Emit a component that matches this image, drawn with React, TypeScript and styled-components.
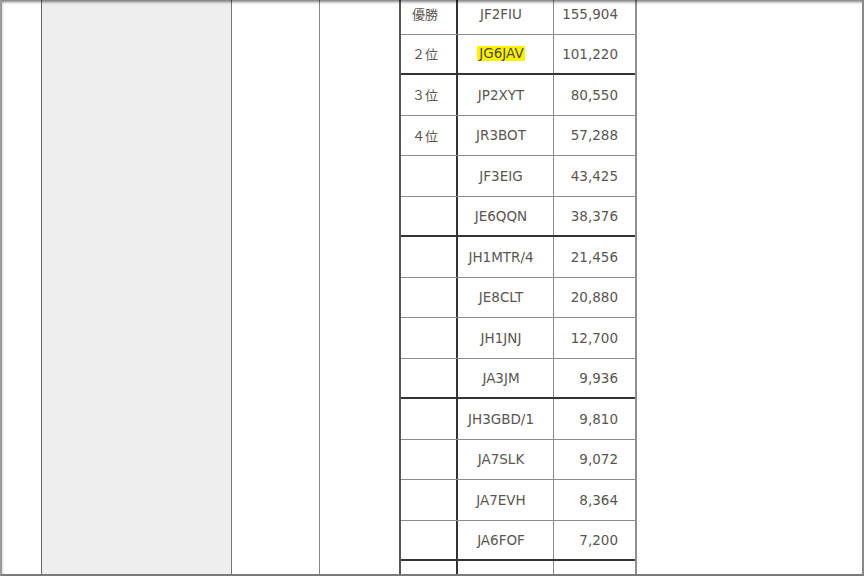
import styled, { createGlobalStyle } from 'styled-components';

type Entry = { rank: string; call: string; score: string; mark?: boolean };

const entries: Entry[] = [
  { rank: '優勝', call: 'JF2FIU', score: '155,904' },
  { rank: '２位', call: 'JG6JAV', score: '101,220', mark: true },
  { rank: '３位', call: 'JP2XYT', score: '80,550' },
  { rank: '４位', call: 'JR3BOT', score: '57,288' },
  { rank: '', call: 'JF3EIG', score: '43,425' },
  { rank: '', call: 'JE6QQN', score: '38,376' },
  { rank: '', call: 'JH1MTR/4', score: '21,456' },
  { rank: '', call: 'JE8CLT', score: '20,880' },
  { rank: '', call: 'JH1JNJ', score: '12,700' },
  { rank: '', call: 'JA3JM', score: '9,936' },
  { rank: '', call: 'JH3GBD/1', score: '9,810' },
  { rank: '', call: 'JA7SLK', score: '9,072' },
  { rank: '', call: 'JA7EVH', score: '8,364' },
  { rank: '', call: 'JA6FOF', score: '7,200' },
  { rank: '', call: '', score: '' },
];

const GlobalStyle = createGlobalStyle`
  html, body {
    margin: 0;
    padding: 0;
    background: #ffffff;
  }
  body {
    font-family: "DejaVu Sans", "Noto Sans CJK JP", sans-serif;
  }
`;

const Frame = styled.div`
  box-sizing: border-box;
  width: 864px;
  height: 576px;
  overflow: hidden;
  display: flex;
  position: relative;
  border-left: 2px solid #9a9a9a;
  border-right: 2px solid #8a8a8a;
  border-bottom: 2px solid #7a7a7a;
  background: #ffffff;
  &::after {
    content: '';
    position: absolute;
    inset: 0;
    pointer-events: none;
    box-shadow: inset 0 4px 3px -2px rgba(0, 0, 0, 0.5), inset 3px 0 3px -2px rgba(0, 0, 0, 0.12);
  }
`;

const Column = styled.div<{ $w: number; $bg?: string; $line?: string }>`
  box-sizing: border-box;
  flex: 0 0 ${({ $w }) => $w}px;
  height: 100%;
  background: ${({ $bg }) => $bg || '#ffffff'};
  border-right: ${({ $line }) => ($line ? `1px solid ${$line}` : 'none')};
`;

const Filler = styled.div`
  flex: 1;
  height: 100%;
`;

const Ranking = styled.div`
  flex: 0 0 238px;
  box-sizing: border-box;
  height: 100%;
  border-left: 2px solid #555555;
  border-right: 2px solid #8f8f8f;
  display: flex;
  flex-direction: column;
`;

const Rows = styled.div`
  margin-top: -6px;
`;

const Row = styled.div<{ $thick: boolean }>`
  box-sizing: border-box;
  height: 40.5px;
  display: flex;
  border-bottom: ${({ $thick }) => ($thick ? '2px solid #333333' : '1px solid #8c8c8c')};
`;

const Cell = styled.div<{ $w: number; $align: 'left' | 'center' | 'right'; $line: string; $lw: number }>`
  box-sizing: border-box;
  flex: 0 0 ${({ $w }) => $w}px;
  display: flex;
  align-items: center;
  justify-content: ${({ $align }) =>
    $align === 'left' ? 'flex-start' : $align === 'right' ? 'flex-end' : 'center'};
  border-right: ${({ $lw, $line }) => ($lw ? `${$lw}px solid ${$line}` : 'none')};
  font-size: 13.5px;
  color: #5a5552;
  white-space: nowrap;
`;

const RankCell = styled(Cell)`
  padding-left: 11px;
  font-family: "Noto Sans CJK JP", sans-serif;
  font-size: 13px;
`;

const CallCell = styled(Cell)`
  padding-right: 9px;
`;

const ScoreCell = styled(Cell)`
  padding-right: 17px;
`;

const Marker = styled.span`
  display: inline-block;
  line-height: 15px;
  padding: 0 1px 0 2px;
  background: #fff200;
  color: #4a4a3a;
`;

export default function App() {
  return (
    <>
      <GlobalStyle />
      <Frame>
        <Column $w={40} $line="#666666" />
        <Column $w={190} $bg="#eeeeee" $line="#777777" />
        <Column $w={88} $line="#888888" />
        <Column $w={79} />
        <Ranking>
          <Rows>
            {entries.map((e, i) => (
              <Row key={i} $thick={i === 1 || i === 5 || i === 9 || i === 13}>
                <RankCell $w={57} $align="left" $line="#333333" $lw={2}>
                  {e.rank}
                </RankCell>
                <CallCell $w={96} $align="center" $line="#8c8c8c" $lw={1}>
                  {e.mark ? <Marker>{e.call}</Marker> : e.call}
                </CallCell>
                <ScoreCell $w={81} $align="right" $line="" $lw={0}>
                  {e.score}
                </ScoreCell>
              </Row>
            ))}
          </Rows>
        </Ranking>
        <Filler />
      </Frame>
    </>
  );
}
